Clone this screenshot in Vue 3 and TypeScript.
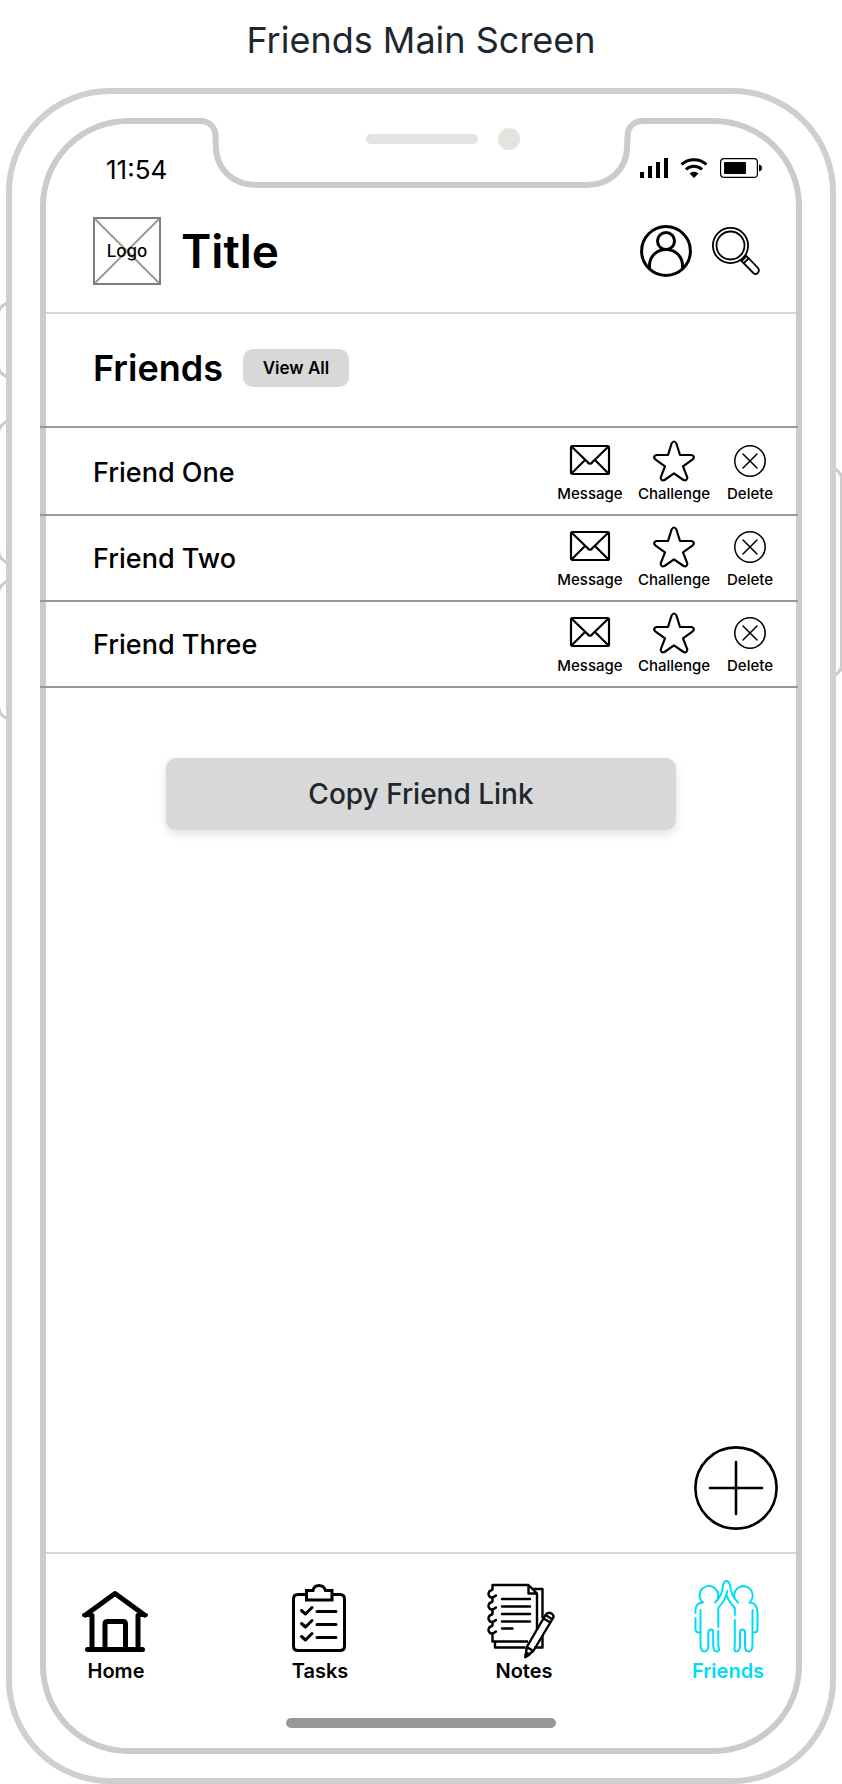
<script setup lang="ts">
interface Friend {
  id: number
  name: string
}

interface NavItem {
  id: string
  label: string
  active: boolean
}

const friends: Friend[] = [
  { id: 1, name: 'Friend One' },
  { id: 2, name: 'Friend Two' },
  { id: 3, name: 'Friend Three' },
]

const navItems: NavItem[] = [
  { id: 'home', label: 'Home', active: false },
  { id: 'tasks', label: 'Tasks', active: false },
  { id: 'notes', label: 'Notes', active: false },
  { id: 'friends', label: 'Friends', active: true },
]
</script>

<template>
  <div class="page">
    <h1 class="page-title">Friends Main Screen</h1>

    <div class="phone">
      <span class="side-key key-mute"></span>
      <span class="side-key key-up"></span>
      <span class="side-key key-down"></span>
      <span class="side-key key-power"></span>

      <div class="screen">
        <svg class="notch" viewBox="0 0 435 76" width="435" height="76" aria-hidden="true">
          <path d="M-2 -2H437V11H0Z" fill="#fff" />
          <path
            d="M0 9C8 9 11.500 15 11.500 24C11.500 30 12 33 12 37C13 57 29 73 52 73H383C406 73 422 57 423 37C423 33 423.500 30 423.500 24C423.500 15 427 9 435 9"
            fill="#fff"
          />
          <path
            d="M-6 9H-4C5 9 11.500 15 11.500 24C11.500 30 12 33 12 37C13 57 29 73 52 73H383C406 73 422 57 423 37C423 33 423.500 30 423.500 24C423.500 15 430 9 439 9H441"
            fill="none"
            stroke="#cbccc8"
            stroke-width="6"
          />
          <rect x="162" y="22" width="112" height="10" rx="5" fill="#e2e4df" />
          <circle cx="305" cy="27" r="11" fill="#e2e4df" />
        </svg>

        <div class="status">
          <span class="time">11:54</span>
          <div class="status-icons">
            <svg viewBox="0 0 28 20" width="28" height="20" aria-hidden="true">
              <path d="M0 14h4v6H0zM8 8h4v12H8zM16 4h4v16h-4zM24 0h4v20h-4z" />
            </svg>
            <svg viewBox="0 0 28 20" width="28" height="20" aria-hidden="true">
              <g fill="none" stroke="#000" stroke-width="3">
                <path d="M1.500 6.500C8.500 0 19.500 0 26.500 6.500" />
                <path d="M6 11.500C10.500 7.200 17.500 7.200 22 11.500" />
              </g>
              <path d="M14 20L9.600 15.600C12 13.200 16 13.200 18.400 15.600Z" />
            </svg>
            <svg viewBox="0 0 42 20" width="42" height="20" aria-hidden="true">
              <rect x=".6" y=".6" width="36.800" height="18.800" rx="3.500" fill="none" stroke="#000" stroke-width="1.200" />
              <rect x="4" y="4" width="22" height="12" rx="1" />
              <path d="M39 6.500C43 7 43 13 39 13.500Z" />
            </svg>
          </div>
        </div>

        <header class="app-bar">
          <div class="logo">
            <svg viewBox="0 0 64 64" aria-hidden="true">
              <path d="M0 0L64 64M64 0L0 64" stroke="#999" stroke-width="2" />
            </svg>
            <span>Logo</span>
          </div>
          <h2 class="app-title">Title</h2>
          <button class="icon-button" type="button" aria-label="Profile">
            <svg viewBox="0 0 52 52" width="52" height="52" fill="none" stroke="#000" stroke-width="3">
              <circle cx="26" cy="26" r="24.400" />
              <circle cx="26" cy="16" r="8.500" />
              <path d="M9.500 44V41C9.500 31 17 24.500 26 24.500S42.500 31 42.500 41V44" />
            </svg>
          </button>
          <button class="icon-button" type="button" aria-label="Search">
            <svg viewBox="0 0 48 48" width="48" height="48" fill="none" stroke="#000" stroke-width="1.800">
              <circle cx="18.500" cy="18.500" r="17.600" />
              <circle cx="18.500" cy="18.500" r="14" />
              <path d="M29.500 34L34.500 29L46 41C48.500 44.500 44.500 48.500 41.500 46.200ZM31.800 36.200L36.500 31.500" />
            </svg>
          </button>
        </header>

        <main class="content">
          <section class="section-head">
            <h3>Friends</h3>
            <button class="view-all" type="button">View All</button>
          </section>

          <ul class="friend-list">
            <li v-for="friend in friends" :key="friend.id" class="friend">
              <span class="friend-name">{{ friend.name }}</span>
              <button class="action" type="button">
                <svg viewBox="0 0 42 42" width="42" height="42" fill="none" stroke="#000" stroke-width="2.200">
                  <rect x="2" y="6" width="38" height="28" rx="1.500" />
                  <path d="M3 7L18.500 22Q21 25.500 23.500 22L39 7M3 33L16 20M39 33L26 20" />
                </svg>
                Message
              </button>
              <button class="action" type="button">
                <svg viewBox="0 0 42 42" width="42" height="42" fill="none" stroke="#000" stroke-width="2.200" stroke-linejoin="round">
                  <path d="M18.600 3.500Q21 -.5 23.400 3.500L27 15H38.500Q42.500 16.500 39.700 19.300L30 26.300L34.300 37.300Q34.300 41.300 30.500 40L21 33.300L11.500 40Q7.700 41.300 7.700 37.300L12 26.300L2.300 19.300Q-.5 16.500 3.500 15H15Z" />
                </svg>
                Challenge
              </button>
              <button class="action" type="button">
                <svg viewBox="0 0 42 42" width="42" height="42" fill="none" stroke="#000" stroke-width="1.500">
                  <circle cx="21" cy="21" r="15.200" />
                  <path d="M14 14L28 28M28 14L14 28" stroke-linecap="round" />
                </svg>
                Delete
              </button>
            </li>
          </ul>

          <button class="copy-link" type="button">Copy Friend Link</button>

          <button class="fab" type="button" aria-label="Add friend">
            <svg viewBox="0 0 84 84" width="84" height="84" fill="none" stroke="#000" stroke-width="2.600" stroke-linecap="round">
              <circle cx="42" cy="42" r="40.600" />
              <path d="M42 16V68M16 42H68" />
            </svg>
          </button>
        </main>

        <nav class="tab-bar">
          <a v-for="item in navItems" :key="item.id" href="#" class="tab" :class="{ active: item.active }">
            <svg v-if="item.id === 'home'" viewBox="0 0 68 78" width="68" height="78" fill="none" stroke="currentColor" stroke-width="5" stroke-linecap="round" stroke-linejoin="round">
              <path d="M5.500 69.500H60.500" />
              <path d="M10 69V35.500M56 69V35.500" />
              <path d="M3.500 35L33 13.500L62.500 35" />
              <path d="M23 69V44Q23 41.500 25.500 41.500H41Q43.500 41.500 43.500 44V69" />
              <path d="M2 35H9M57 35H64" stroke-width="4" />
            </svg>
            <svg v-else-if="item.id === 'tasks'" viewBox="0 0 68 78" width="68" height="78" fill="none" stroke="currentColor" stroke-width="3" stroke-linecap="round" stroke-linejoin="round">
              <path d="M20 14.500H12Q7.500 14.500 7.500 19V66Q7.500 70.500 12 70.500H54Q58.500 70.500 58.500 66V19Q58.500 14.500 54 14.500H46.500" />
              <path d="M20.500 20V10.500H27Q28 5.500 33 5.500T39.500 10.500H46V20Z" stroke-linejoin="miter" />
              <path d="M31 31.500H50M31 44.500H50M31 57.500H50" />
              <path d="M15.500 30.500L19.500 34L26 27.500M15.500 43.500L19.500 47L26 40.500M15.500 56.500L19.500 60L26 53.500" />
            </svg>
            <svg v-else-if="item.id === 'notes'" viewBox="2 0 68 78" width="68" height="78" fill="none" stroke="currentColor" stroke-width="2.400" stroke-linejoin="round">
              <path d="M4.500 10V5H40.500L49 13.500V50M4.500 17V22M4.500 30V34.500M4.500 42.500V46M4.500 54V61.500H40" />
              <path d="M40.500 5V13.500H49M45 9H54.500V38M7 62V67.500H37.500M46 67.500H54.500V55" />
              <path d="M14 19H42M14 26.500H42M14 34H42M14 41.500H42M14 48.500H24.500" stroke-linecap="round" />
              <path d="M4 10Q.3 11 .5 14.500Q2.500 20 8 15.500M4 22Q.3 23 .5 26.500Q2.500 32 8 27.500M4 34.500Q.3 35.500 .5 39Q2.500 44.500 8 40M4 46Q.3 47 .5 50.500Q2.500 56 8 51.500" stroke-linecap="round" />
              <path d="M37.500 77L38.800 67L57.500 35Q60 31.500 63.500 33.500T64.500 39L45.300 71ZM38.800 67L45.300 71M55.500 38.500L62 42.200M57.500 35L63.800 39" />
              <path d="M37.500 77L38.200 72.500L41.500 74.500Z" fill="currentColor" />
            </svg>
            <svg v-else viewBox="0 0 68 78" width="68" height="78" fill="none" stroke="currentColor" stroke-width="2" stroke-linecap="round" stroke-linejoin="round">
              <path d="M1.500 33V31Q1.500 22.500 9 22.500A9.300 9.300 0 1 1 23.800 18" />
              <path d="M1.500 38V49Q1.500 52.500 5.500 52.500M6.500 30V66Q7 71.500 10.500 71.500T14.300 66V52Q15 49.500 17 49.500T19.200 52V66Q19.500 71.500 23 71.500T24.300 66V51M24.300 47V28L29 22Q32 17 33.500 11" />
              <path d="M21 22.500Q28.500 16 29 5Q30 1 32.500 1T36 5Q37 16 44 22.500" />
              <path d="M40.500 18A9.300 9.300 0 1 1 55.500 22.500Q63 22.500 63.500 32V49Q63.500 52.500 60 52.500" />
              <path d="M58.500 30V66Q58 71.500 54.500 71.500T51 66V52Q50.500 49.500 48.500 49.500T46 52V66Q45.500 71.500 42.500 71.500T40.800 66V40M40.800 35V28Q35 22 33 16" />
            </svg>
            {{ item.label }}
          </a>
        </nav>
        <div class="home-indicator"></div>
      </div>
    </div>
  </div>
</template>

<style>
body {
  margin: 0;
  background: #fff;
}
</style>

<style scoped>
* {
  box-sizing: border-box;
}

.page {
  display: flex;
  flex-direction: column;
  min-height: 100vh;
  overflow: hidden;
  background: #fff;
  color: #000;
  font-family: Inter, 'Liberation Sans', sans-serif;
}

h1,
h2,
h3,
ul {
  margin: 0;
  padding: 0;
}

button {
  padding: 0;
  border: 0;
  background: none;
  color: inherit;
  font-family: inherit;
  cursor: pointer;
}

svg {
  display: block;
  flex: none;
}

.page-title {
  padding: 16px 0 24px;
  color: #1e272e;
  font-size: 36px;
  font-weight: 400;
  line-height: 48px;
  text-align: center;
}

.phone {
  position: relative;
  display: flex;
  flex: 1;
  margin: 0 6px;
  padding: 24px 28px;
  border: 6px solid #cfcfcf;
  border-radius: 104px;
}

.side-key {
  position: absolute;
  left: -15px;
  width: 30px;
  border: 3px solid #cbccc8;
  border-radius: 12px;
  clip-path: inset(0 21px 0 0);
}

.key-mute {
  top: 208px;
  height: 76px;
}

.key-up {
  top: 325px;
  height: 146px;
  border-radius: 15px;
}

.key-down {
  top: 485px;
  height: 142px;
  border-radius: 15px;
}

.key-power {
  top: 373px;
  right: -13px;
  left: auto;
  height: 210px;
  clip-path: inset(0 0 0 23px);
}

.screen {
  position: relative;
  display: flex;
  flex: 1;
  flex-direction: column;
  min-width: 0;
  border: 6px solid #cbccc8;
  border-radius: 88px;
}

.notch {
  position: absolute;
  top: -12px;
  left: 50%;
  margin-left: -217px;
  overflow: visible;
}

.status {
  display: flex;
  align-items: center;
  justify-content: space-between;
  padding: 28px 34px 0 60px;
}

.time {
  font-size: 26px;
  line-height: 36px;
}

.status-icons {
  display: flex;
  gap: 12px;
  padding-bottom: 4px;
}

.app-bar {
  display: flex;
  align-items: center;
  gap: 20px;
  height: 126px;
  padding: 2px 36px 0 47px;
  border-bottom: 2px solid #d6d6d6;
}

.logo {
  display: grid;
  width: 68px;
  height: 68px;
  border: 2px solid #7d7f88;
  font-size: 17px;
  font-weight: 500;
}

.logo > * {
  grid-area: 1 / 1;
  place-self: center;
}

.app-title {
  flex: 1;
  font-size: 46px;
  font-weight: 600;
  line-height: 60px;
}

.icon-button {
  line-height: 0;
}

.content {
  display: flex;
  flex: 1;
  flex-direction: column;
}

.section-head {
  display: flex;
  align-items: center;
  gap: 20px;
  height: 112px;
  padding: 0 0 4px 47px;
}

h3 {
  font-size: 36px;
  font-weight: 600;
  line-height: 48px;
}

.view-all {
  width: 106px;
  height: 38px;
  border-radius: 10px;
  background: #d8d8d8;
  font-size: 17px;
  font-weight: 600;
}

.friend-list {
  margin: 0 -2px 0 -6px;
  border-top: 2px solid #969696;
  list-style: none;
}

.friend {
  display: grid;
  grid-template-columns: 1fr 84px 84px 68px;
  align-items: center;
  height: 86px;
  padding: 0 14px 0 53px;
  border-bottom: 2px solid #969696;
}

.friend:first-child {
  height: 88px;
  padding-top: 2px;
}

.friend-name {
  font-size: 27px;
  font-weight: 500;
}

.action {
  display: flex;
  flex-direction: column;
  align-items: center;
  gap: 2px;
  font-size: 15px;
  font-weight: 500;
  line-height: 20px;
}

.copy-link {
  align-self: center;
  width: 68%;
  height: 72px;
  margin-top: 70px;
  border-radius: 10px;
  background: #d8d8d8;
  box-shadow: 0 4px 10px rgba(0, 0, 0, 0.12);
  color: #1e272e;
  font-size: 28px;
  font-weight: 500;
}

.fab {
  align-self: flex-end;
  margin: auto 18px 22px 0;
  border-radius: 50%;
}

.tab-bar {
  display: flex;
  justify-content: space-between;
  padding: 26px 34px 34px 36px;
  border-top: 2px solid #d6d6d6;
}

.tab {
  display: flex;
  flex-direction: column;
  align-items: center;
  width: 68px;
  color: #000;
  font-size: 20px;
  font-weight: 600;
  line-height: 26px;
  text-decoration: none;
  white-space: nowrap;
}

.tab svg {
  overflow: visible;
}

.tab.active {
  color: #00dcf5;
}

.home-indicator {
  align-self: center;
  width: 36%;
  height: 10px;
  margin-bottom: 20px;
  border-radius: 5px;
  background: #989898;
}
</style>
